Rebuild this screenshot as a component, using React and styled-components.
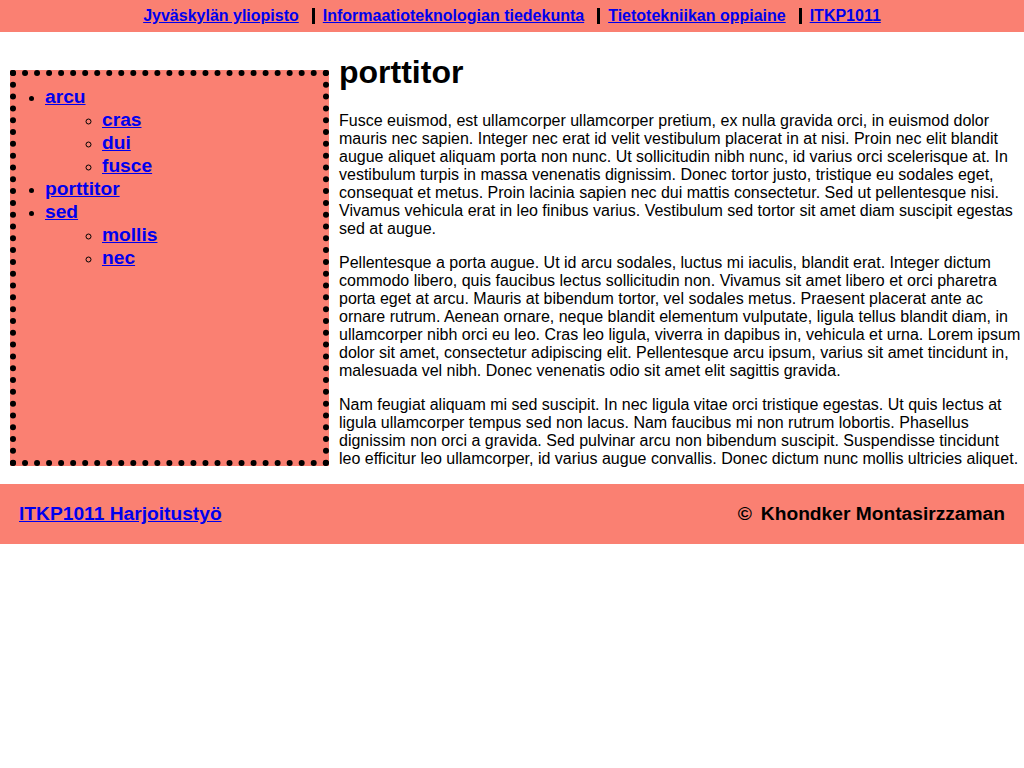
import styled, { createGlobalStyle } from 'styled-components';

const GlobalStyle = createGlobalStyle`
  body {
    margin: 0;
    font-family: "Liberation Sans", Arial, sans-serif;
    font-size: 16px;
    background: #fff;
    color: #000;
  }
  a {
    color: #0000ee;
    font-weight: bold;
  }
`;

const topLinks = [
  'Jyväskylän yliopisto',
  'Informaatioteknologian tiedekunta',
  'Tietotekniikan oppiaine',
  'ITKP1011',
];

const menu = [
  { name: 'arcu', children: ['cras', 'dui', 'fusce'] },
  { name: 'porttitor', children: [] },
  { name: 'sed', children: ['mollis', 'nec'] },
];

const paragraphs = [
  'Fusce euismod, est ullamcorper ullamcorper pretium, ex nulla gravida orci, in euismod dolor mauris nec sapien. Integer nec erat id velit vestibulum placerat in at nisi. Proin nec elit blandit augue aliquet aliquam porta non nunc. Ut sollicitudin nibh nunc, id varius orci scelerisque at. In vestibulum turpis in massa venenatis dignissim. Donec tortor justo, tristique eu sodales eget, consequat et metus. Proin lacinia sapien nec dui mattis consectetur. Sed ut pellentesque nisi. Vivamus vehicula erat in leo finibus varius. Vestibulum sed tortor sit amet diam suscipit egestas sed at augue.',
  'Pellentesque a porta augue. Ut id arcu sodales, luctus mi iaculis, blandit erat. Integer dictum commodo libero, quis faucibus lectus sollicitudin non. Vivamus sit amet libero et orci pharetra porta eget at arcu. Mauris at bibendum tortor, vel sodales metus. Praesent placerat ante ac ornare rutrum. Aenean ornare, neque blandit elementum vulputate, ligula tellus blandit diam, in ullamcorper nibh orci eu leo. Cras leo ligula, viverra in dapibus in, vehicula et urna. Lorem ipsum dolor sit amet, consectetur adipiscing elit. Pellentesque arcu ipsum, varius sit amet tincidunt in, malesuada vel nibh. Donec venenatis odio sit amet elit sagittis gravida.',
  'Nam feugiat aliquam mi sed suscipit. In nec ligula vitae orci tristique egestas. Ut quis lectus at ligula ullamcorper tempus sed non lacus. Nam faucibus mi non rutrum lobortis. Phasellus dignissim non orci a gravida. Sed pulvinar arcu non bibendum suscipit. Suspendisse tincidunt leo efficitur leo ullamcorper, id varius augue convallis. Donec dictum nunc mollis ultricies aliquet.',
];

const App = () => (
  <>
    <GlobalStyle />
    <TopBar>
      <TopList>
        {topLinks.map((link, i) => (
          <TopItem key={link} first={i === 0}>
            <a href="#">{link}</a>
          </TopItem>
        ))}
      </TopList>
    </TopBar>
    <Layout>
      <Sidebar>
        <Menu>
          {menu.map(item => (
            <MenuItem key={item.name}>
              <MenuLink href="#">{item.name}</MenuLink>
              {item.children.length > 0 && (
                <SubMenu>
                  {item.children.map(child => (
                    <MenuItem key={child}>
                      <MenuLink href="#">{child}</MenuLink>
                    </MenuItem>
                  ))}
                </SubMenu>
              )}
            </MenuItem>
          ))}
        </Menu>
      </Sidebar>
      <Main>
        <Title>porttitor</Title>
        {paragraphs.map((text, i) => (
          <Paragraph key={i}>{text}</Paragraph>
        ))}
      </Main>
    </Layout>
    <Footer>
      <a href="#">ITKP1011 Harjoitustyö</a>
      <Author>
        <span>©</span>
        <span>Khondker Montasirzzaman</span>
      </Author>
    </Footer>
  </>
);

export default App;

const TopBar = styled.header`
  background: #fa8072;
  height: 32px;
  display: flex;
  align-items: center;
  justify-content: center;
`;

const TopList = styled.ul`
  list-style: none;
  margin: 0;
  padding: 0;
  display: flex;
  align-items: center;
`;

const TopItem = styled.li`
  line-height: 16px;
  padding-left: ${props => (props.first ? '0' : '8px')};
  margin-left: ${props => (props.first ? '0' : '13px')};
  border-left: ${props => (props.first ? 'none' : '3px solid #000')};
`;

const Layout = styled.div`
  display: flex;
  align-items: stretch;
`;

const Sidebar = styled.nav`
  flex: 0 0 319px;
  box-sizing: border-box;
  margin: 38px 0 18px 10px;
  border: 6px dotted #000;
  background: #fa8072;
`;

const Menu = styled.ul`
  margin: 0;
  padding: 10px 0 0 29px;
  list-style: disc;
  font-size: 16px;
`;

const SubMenu = styled.ul`
  margin: 0;
  padding-left: 57px;
  list-style: circle;
`;

const MenuItem = styled.li`
  line-height: 23px;
`;

const MenuLink = styled.a`
  font-size: 19.2px;
  line-height: 19px;
`;

const Main = styled.main`
  flex: 1;
  margin-left: 10px;
  min-width: 0;
`;

const Title = styled.h1`
  font-size: 32px;
  margin: 22px 0 21px;
`;

const Paragraph = styled.p`
  margin: 16px 0;
  line-height: 18px;
`;

const Footer = styled.footer`
  background: #fa8072;
  display: flex;
  justify-content: space-between;
  align-items: center;
  padding: 19px;
  font-size: 19.2px;
  line-height: 22px;
`;

const Author = styled.div`
  font-weight: bold;
  display: flex;
  gap: 9px;
`;
